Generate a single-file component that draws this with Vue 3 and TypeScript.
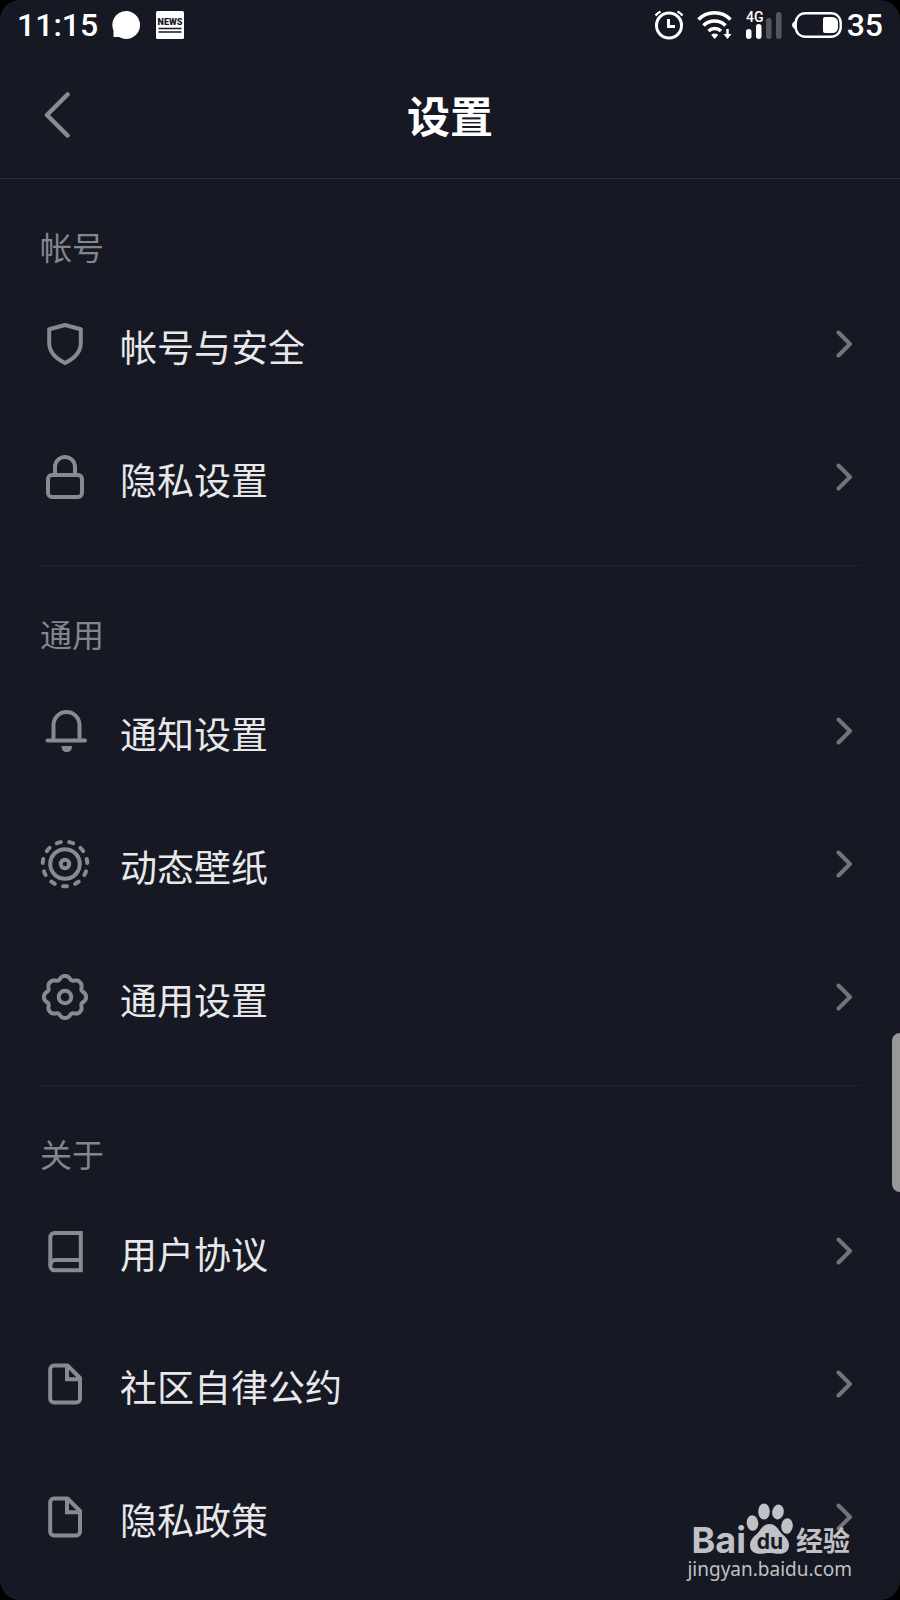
<script setup lang="ts">
type IconName = 'shield' | 'lock' | 'bell' | 'wallpaper' | 'gear' | 'book' | 'doc'

interface Item {
  icon: IconName
  label: string
}

interface Section {
  title: string
  items: Item[]
}

const sections: Section[] = [
  {
    title: '帐号',
    items: [
      { icon: 'shield', label: '帐号与安全' },
      { icon: 'lock', label: '隐私设置' },
    ],
  },
  {
    title: '通用',
    items: [
      { icon: 'bell', label: '通知设置' },
      { icon: 'wallpaper', label: '动态壁纸' },
      { icon: 'gear', label: '通用设置' },
    ],
  },
  {
    title: '关于',
    items: [
      { icon: 'book', label: '用户协议' },
      { icon: 'doc', label: '社区自律公约' },
      { icon: 'doc', label: '隐私政策' },
    ],
  },
]

// Eight-lobed gear outline, sampled in polar coordinates
const gearPath =
  Array.from({ length: 180 }, (_, i) => {
    const t = (i / 180) * Math.PI * 2
    const r = 19.7 + 1.6 * Math.cos(8 * t) - 0.25 * Math.cos(16 * t)
    const x = (25 + r * Math.cos(t)).toFixed(2)
    const y = (25 + r * Math.sin(t)).toFixed(2)
    return `${i === 0 ? 'M' : 'L'}${x} ${y}`
  }).join('') + 'Z'
</script>

<template>
  <div class="screen">
    <div class="status">
      <span class="clock">11:15</span>
      <svg class="bubble" width="30" height="30" viewBox="0 0 30 30" aria-hidden="true">
        <path d="M15 1a14 14 0 1 1-7 26.100H2.500v-6.500A14 14 0 0 1 15 1z" fill="#fff" />
      </svg>
      <svg width="28" height="28" viewBox="0 0 28 28" aria-hidden="true">
        <rect width="28" height="28" rx="1.500" fill="#fff" />
        <text x="14" y="13.500" text-anchor="middle" class="news">NEWS</text>
        <path d="M2.500 17.500h23M2.500 21h23" stroke="#161823" stroke-width="1.500" />
      </svg>
      <div class="tray">
        <svg width="30" height="30" viewBox="0 0 30 30" fill="none" stroke="#fff" aria-hidden="true">
          <circle cx="15" cy="15.500" r="12.500" stroke-width="3" />
          <path d="M14.500 9v7.500H21" stroke-width="3" />
          <path d="M1.500 5.500a16 16 0 0 1 5-4M28.500 5.500a16 16 0 0 0-5-4" stroke-width="2.500" />
        </svg>
        <svg class="wifi" width="36" height="30" viewBox="0 0 36 30" fill="none" stroke="#fff" aria-hidden="true">
          <path d="M1.500 9.500a22.500 22.500 0 0 1 32 0M6.500 15.500a15.500 15.500 0 0 1 22 0M11.500 21a9 9 0 0 1 12.500 0" stroke-width="3.500" />
          <path d="M17.700 23.500c2 0 3 .8 3.500 1.500L17.700 29l-3.500-4c.5-.7 1.500-1.500 3.500-1.500z" fill="#fff" stroke="none" />
          <path d="M30.500 19v6" stroke-width="2.500" />
          <path d="M26.500 24h8l-4 5z" fill="#fff" stroke="none" />
        </svg>
        <svg width="38" height="30" viewBox="0 0 38 30" aria-hidden="true">
          <text x="0" y="12" class="net">4G</text>
          <rect x="0" y="19" width="5.500" height="10" rx="2.700" fill="#fff" />
          <rect x="10" y="14" width="5.500" height="15" rx="2.700" fill="#fff" />
          <rect x="20" y="8" width="5.500" height="21" rx="2.700" fill="#54555e" />
          <rect x="30" y="2" width="5.500" height="27" rx="2.700" fill="#54555e" />
        </svg>
        <svg class="battery" width="52" height="28" viewBox="0 0 52 28" aria-hidden="true">
          <rect x="3.700" y="2.200" width="45" height="23.600" rx="9.500" fill="none" stroke="#fff" stroke-width="2.400" />
          <path d="M4 9.500v9C2 18 0 16 0 14S2 10 4 9.500z" fill="#fff" />
          <path d="M33 6h7.500a5.500 5.500 0 0 1 5.500 5.500v5a5.500 5.500 0 0 1-5.500 5.500H33a2 2 0 0 1-2-2V8a2 2 0 0 1 2-2z" fill="#fff" />
        </svg>
        <span class="charge">35</span>
      </div>
    </div>

    <header class="header">
      <button class="back" type="button" aria-label="返回">
        <svg width="30" height="50" viewBox="0 0 30 50" aria-hidden="true">
          <path d="M27.500 5.500L7 26l20.500 20.500" fill="none" stroke="#8a8b92" stroke-width="4.500" stroke-linecap="round" stroke-linejoin="round" />
        </svg>
      </button>
      <h1 class="title">设置</h1>
    </header>

    <main>
      <section v-for="section in sections" :key="section.title" class="section">
        <h2 class="section-title">{{ section.title }}</h2>
        <button v-for="item in section.items" :key="item.label" class="row" type="button">
          <svg class="icon" width="50" height="50" viewBox="0 0 50 50" aria-hidden="true">
            <path v-if="item.icon === 'shield'" d="M25 6l15.800 4.200V24c0 9-6.500 15.500-15.800 20C15.700 39.500 9.200 33 9.200 24V10.200z" />
            <g v-else-if="item.icon === 'lock'">
              <rect x="8" y="23" width="34" height="22" rx="4" />
              <path d="M15 23v-8a10 10 0 0 1 20 0v8" />
            </g>
            <g v-else-if="item.icon === 'bell'">
              <path d="M7.500 34.500h37.500M12.500 34.500q1-1 1-4V19a13 13 0 0 1 26 0v11.500q0 3 1 4" stroke-linecap="round" />
              <path d="M21.500 40h10.500q0 6-5.200 6.200-5.300-.2-5.300-6.200z" class="solid" />
            </g>
            <g v-else-if="item.icon === 'wallpaper'">
              <circle cx="25" cy="25" r="22.300" pathLength="110" stroke-dasharray="3.200 6.800" stroke-dashoffset="1.600" stroke-linecap="round" transform="rotate(90 25 25)" />
              <circle cx="25" cy="25" r="14.800" />
              <circle cx="25" cy="25" r="4.200" />
            </g>
            <g v-else-if="item.icon === 'gear'">
              <path :d="gearPath" />
              <circle cx="25" cy="25" r="6.300" />
            </g>
            <g v-else-if="item.icon === 'book'">
              <path d="M40.800 7H14.500a4.200 4.200 0 0 0-4.200 4.200V40a4.300 4.300 0 0 0 4.300 4.300h26.200z" stroke-linejoin="miter" />
              <path d="M40 34H15.500q-5 .3-5 5.200" />
            </g>
            <g v-else>
              <path d="M27.500 6.500H14a3.800 3.800 0 0 0-3.800 3.800v29.400a3.800 3.800 0 0 0 3.800 3.800h22.200a3.800 3.800 0 0 0 3.800-3.800V19z" />
              <path d="M27 7.500v12.800h12.500" stroke-linejoin="miter" />
            </g>
          </svg>
          <span class="label">{{ item.label }}</span>
          <svg class="chevron" width="18" height="30" viewBox="0 0 18 30" aria-hidden="true">
            <path d="M4.500 3.500L16 15 4.500 26.500" />
          </svg>
        </button>
      </section>
    </main>

    <div class="handle"></div>

    <div class="watermark">
      <div class="brand">
        <span class="bai">Bai</span>
        <svg class="paw" width="48" height="52" viewBox="0 0 48 52" aria-hidden="true">
          <ellipse cx="6.500" cy="20" rx="5.800" ry="7.800" transform="rotate(-6 6.500 20)" />
          <ellipse cx="18" cy="8.500" rx="5.800" ry="8" />
          <ellipse cx="32" cy="9" rx="5.800" ry="7.500" transform="rotate(12 32 9)" />
          <ellipse cx="41" cy="23" rx="5.800" ry="7.800" transform="rotate(6 41 23)" />
          <path d="M23.500 21c5.500 0 8 4 10.500 7.500 3 4 9 7 9 13.500 0 7-5 9-11 8.800-3-.1-5.500-.8-8.500-.8s-5.500.7-8.500.8c-6 .2-11-2-11-8.800 0-6.500 6-9.500 9-13.500 2.500-3.500 5-7.500 10.500-7.500z" />
          <text x="24" y="46" text-anchor="middle" class="du">du</text>
        </svg>
        <span class="jingyan">经验</span>
      </div>
      <div class="site">jingyan.baidu.com</div>
    </div>
  </div>
</template>

<style>
html,
body {
  background: #000;
}

body {
  margin: 0;
}
</style>

<style scoped>
.screen {
  position: relative;
  box-sizing: border-box;
  min-height: 100vh;
  overflow: hidden;
  border-radius: 20px;
  background: #161823;
  color: #e8e8ea;
  font-family: Roboto, "Noto Sans CJK SC", sans-serif;
}

.status {
  display: flex;
  align-items: center;
  height: 50px;
  padding: 0 17px;
  color: #fff;
}

.clock,
.charge {
  font-size: 32px;
  line-height: 50px;
  font-weight: 500;
}

.bubble {
  margin: 0 15px 0 13px;
}

.news {
  font: 900 9px Roboto, sans-serif;
  fill: #161823;
}

.net {
  font: 500 14px Roboto, sans-serif;
  fill: #fff;
}

.tray {
  display: flex;
  align-items: center;
  margin-left: auto;
}

.wifi {
  margin: 0 13px;
}

.battery {
  margin: 0 3px 0 8px;
}

.header {
  display: grid;
  grid-template-columns: 80px 1fr 80px;
  align-items: center;
  height: 128px;
  border-bottom: 1px solid #2c2e38;
}

button {
  margin: 0;
  padding: 0;
  border: 0;
  background: none;
  color: inherit;
  font: inherit;
  cursor: pointer;
}

.back {
  justify-self: start;
  padding-left: 40px;
}

.back svg {
  display: block;
}

.title {
  margin: 0;
  padding-top: 8px;
  color: #fff;
  font-size: 43px;
  line-height: 64px;
  font-weight: 700;
  text-align: center;
}

.section {
  margin: 0 40px;
  padding-bottom: 22px;
  border-bottom: 1px solid #23252f;
}

.section:last-child {
  padding-bottom: 0;
  border-bottom: 0;
}

.section-title {
  margin: 0;
  padding: 46px 0 4px;
  color: #85868d;
  font-size: 32px;
  line-height: 48px;
  font-weight: 400;
}

.row {
  display: flex;
  align-items: center;
  width: 100%;
  height: 133px;
  padding-right: 8px;
  text-align: left;
}

.icon {
  flex: none;
  margin-right: 30px;
  fill: none;
  stroke: #898a91;
  stroke-width: 4px;
  stroke-linejoin: round;
}

.solid {
  fill: #898a91;
  stroke: none;
}

.label {
  flex: 1;
  padding-top: 12px;
  font-size: 37px;
  line-height: 56px;
}

.chevron {
  flex: none;
  fill: none;
  stroke: #72737b;
  stroke-width: 4px;
  stroke-linecap: round;
  stroke-linejoin: round;
}

.handle {
  position: absolute;
  top: 1033px;
  right: 0;
  width: 8px;
  height: 159px;
  border-radius: 8px 0 0 8px;
  background: #98989b;
}

.watermark {
  position: absolute;
  right: 48px;
  bottom: 17px;
  color: #c0c1c4;
}

.brand {
  display: flex;
  align-items: flex-end;
  justify-content: flex-end;
  height: 52px;
  padding-right: 2px;
}

.bai {
  font-family: Inter, sans-serif;
  font-size: 36px;
  line-height: 30px;
  font-weight: 700;
}

.paw {
  fill: #c0c1c4;
}

.du {
  font: 700 21px Inter, sans-serif;
  fill: #161823;
}

.jingyan {
  margin-left: 2px;
  font-family: "Noto Sans CJK SC", sans-serif;
  font-size: 27px;
  line-height: 30px;
  font-weight: 700;
}

.site {
  font-family: "Noto Sans", sans-serif;
  font-size: 19px;
  line-height: 28px;
}
</style>
